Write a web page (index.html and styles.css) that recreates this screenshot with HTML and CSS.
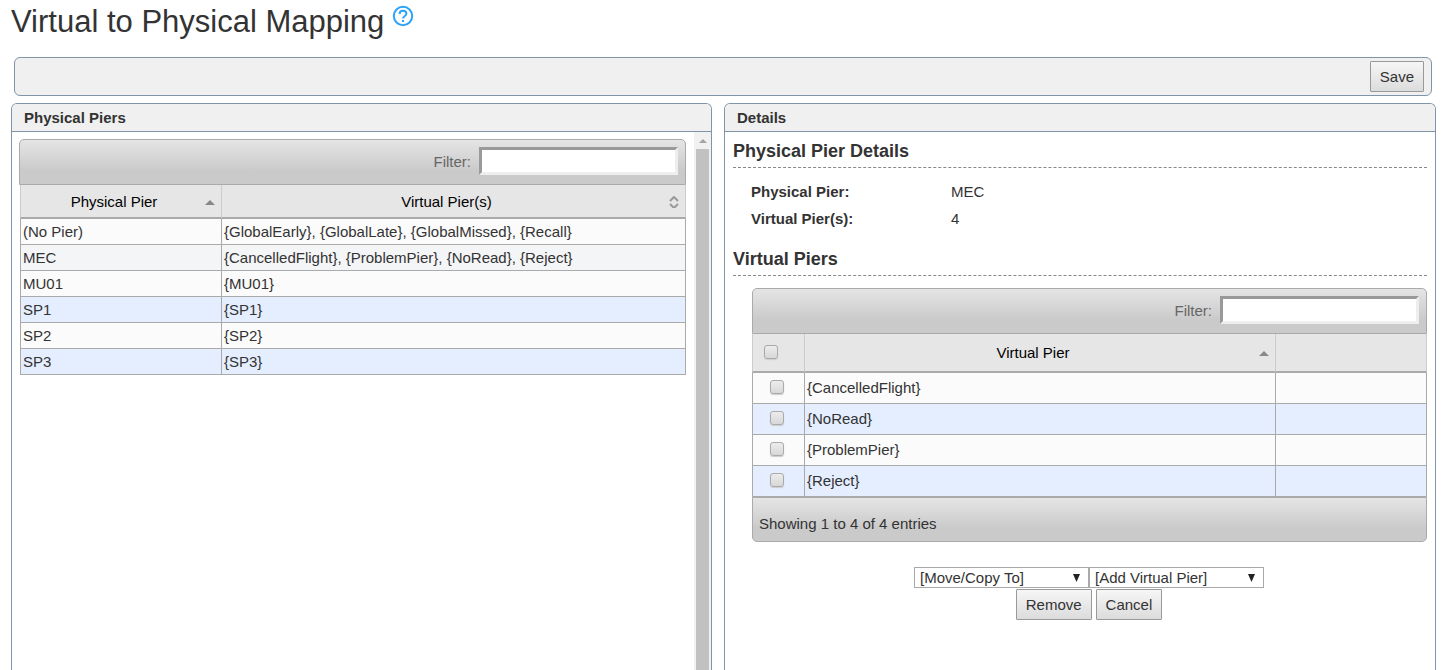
FILE: index.html
```
<!DOCTYPE html>
<html lang="en">
<head>
<meta charset="utf-8">
<title>Virtual to Physical Mapping</title>
<link rel="stylesheet" href="styles.css">
</head>
<body>
<header class="page-header">
  <h1 class="page-title">Virtual to Physical Mapping</h1>
  <a class="help" href="#" aria-label="Help">
    <svg width="22" height="22" viewBox="0 0 22 22" fill="none" stroke="#2ea3fb" stroke-width="2">
      <circle cx="11" cy="11" r="9.2"/>
      <path d="M7.6 9C7.6 6.7 9 5.700 11 5.700S14.400 7 14.400 8.700C14.400 11 11 11 11 13.600"/>
      <path d="M11 15v2"/>
    </svg>
  </a>
</header>
<div class="toolbar"><button type="button" class="btn">Save</button></div>
<main class="panels">
  <section class="panel">
    <h2 class="panel-title">Physical Piers</h2>
    <div class="scroll-area">
      <div class="scroll-content">
        <div class="table-bar table-top">
          <label for="pier-filter">Filter:</label>
          <input class="filter" id="pier-filter" type="text">
        </div>
        <table class="grid piers">
          <colgroup><col class="col-pier"><col></colgroup>
          <thead>
            <tr>
              <th><span class="head">Physical Pier<svg class="sort" width="10" height="12" viewBox="0 0 10 12"><path d="M0 9L5 4l5 5z" fill="#888"/></svg></span></th>
              <th><span class="head">Virtual Pier(s)<svg class="sort" width="10" height="12" viewBox="0 0 10 12" fill="none" stroke="#999" stroke-width="2"><path d="M1 5l4-4 4 4M1 8l4 4 4-4"/></svg></span></th>
            </tr>
          </thead>
          <tbody>
            <tr><td>(No Pier)</td><td>{GlobalEarly}, {GlobalLate}, {GlobalMissed}, {Recall}</td></tr>
            <tr class="current"><td>MEC</td><td>{CancelledFlight}, {ProblemPier}, {NoRead}, {Reject}</td></tr>
            <tr><td>MU01</td><td>{MU01}</td></tr>
            <tr><td>SP1</td><td>{SP1}</td></tr>
            <tr><td>SP2</td><td>{SP2}</td></tr>
            <tr><td>SP3</td><td>{SP3}</td></tr>
          </tbody>
        </table>
      </div>
      <div class="scrollbar" aria-hidden="true">
        <svg class="scroll-up" width="17" height="17" viewBox="0 0 17 17"><path d="M5 11l4-4 4 4z" fill="#a3a3a3"/></svg>
        <div class="scroll-thumb"></div>
      </div>
    </div>
  </section>
  <section class="panel">
    <h2 class="panel-title">Details</h2>
    <div class="details">
      <h3 class="section-title">Physical Pier Details</h3>
      <dl class="facts">
        <dt>Physical Pier:</dt><dd>MEC</dd>
        <dt>Virtual Pier(s):</dt><dd>4</dd>
      </dl>
      <h3 class="section-title">Virtual Piers</h3>
      <div class="virtual">
        <div class="table-bar table-top">
          <label for="virtual-filter">Filter:</label>
          <input class="filter" id="virtual-filter" type="text">
        </div>
        <table class="grid members">
          <colgroup><col class="col-check"><col><col class="col-extra"></colgroup>
          <thead>
            <tr>
              <th class="check-all"><input type="checkbox" class="check" aria-label="Select all"></th>
              <th><span class="head">Virtual Pier<svg class="sort" width="10" height="12" viewBox="0 0 10 12"><path d="M0 9L5 4l5 5z" fill="#888"/></svg></span></th>
              <th></th>
            </tr>
          </thead>
          <tbody>
            <tr><td class="check-cell"><input type="checkbox" class="check" id="c1"></td><td><label for="c1">{CancelledFlight}</label></td><td></td></tr>
            <tr><td class="check-cell"><input type="checkbox" class="check" id="c2"></td><td><label for="c2">{NoRead}</label></td><td></td></tr>
            <tr><td class="check-cell"><input type="checkbox" class="check" id="c3"></td><td><label for="c3">{ProblemPier}</label></td><td></td></tr>
            <tr><td class="check-cell"><input type="checkbox" class="check" id="c4"></td><td><label for="c4">{Reject}</label></td><td></td></tr>
          </tbody>
        </table>
        <div class="table-bar table-bottom">Showing 1 to 4 of 4 entries</div>
        <div class="actions">
          <div class="action-row">
            <span class="pick"><select class="select" aria-label="Move or copy to"><option>[Move/Copy To]</option></select><svg class="arrow" width="7" height="8" viewBox="0 0 7 8"><path d="M0 0h7L3.5 8z" fill="#222"/></svg></span>
            <span class="pick"><select class="select" aria-label="Add virtual pier"><option>[Add Virtual Pier]</option></select><svg class="arrow" width="7" height="8" viewBox="0 0 7 8"><path d="M0 0h7L3.5 8z" fill="#222"/></svg></span>
          </div>
          <div class="action-row buttons">
            <button type="button" class="btn">Remove</button>
            <button type="button" class="btn">Cancel</button>
          </div>
        </div>
      </div>
    </div>
  </section>
</main>
</body>
</html>
```
FILE: styles.css
```
* { box-sizing: border-box; }

body {
  display: flex;
  flex-direction: column;
  height: 100vh;
  margin: 0;
  padding: 0 16px 0 11px;
  overflow: hidden;
  background: #fff;
  color: #333;
  font-family: "Liberation Sans", Arial, sans-serif;
  font-size: 15px;
  line-height: 18px;
}

button, input, select { font: inherit; color: inherit; }

.page-header {
  display: flex;
  align-items: flex-start;
  gap: 8px;
  padding-top: 4px;
  height: 57px;
}

.page-title {
  margin: 0;
  font-size: 31px;
  font-weight: 400;
  line-height: 36px;
}

.help { display: block; height: 22px; margin-top: 1px; }
.help svg { display: block; }

.toolbar {
  display: flex;
  justify-content: flex-end;
  margin: 0 4px 7px 3px;
  padding: 3px 7px;
  border: 1px solid #8096a8;
  border-radius: 6px;
  background: #f0f0f0;
}

.btn {
  height: 31px;
  padding: 0 9px;
  border: 1px solid #999;
  border-radius: 1px;
  background: linear-gradient(#f6f6f6, #dcdcdc);
}

.panels {
  display: grid;
  grid-template-columns: 701fr 712fr;
  gap: 12px;
  flex: 1;
  min-height: 0;
}

.panel {
  display: flex;
  flex-direction: column;
  min-width: 0;
  border: 1px solid #8096a8;
  border-bottom: 0;
  border-radius: 6px 6px 0 0;
}

.panel-title {
  margin: 0;
  padding: 5px 12px 4px;
  border-bottom: 1px solid #8096a8;
  border-radius: 5px 5px 0 0;
  background: #f0f0f0;
  font-size: 15px;
  line-height: 18px;
}

.scroll-area { display: flex; flex: 1; min-height: 0; }
.scroll-content { flex: 1; min-width: 0; padding: 7px 8px 0 7px; }

.scrollbar {
  display: flex;
  flex-direction: column;
  width: 17px;
  background: #f1f1f1;
}
.scroll-up { display: block; }
.scroll-thumb { flex: 1; margin: 0 2px; background: #c1c1c1; }

.table-bar {
  display: flex;
  align-items: center;
  height: 46px;
  border: 1px solid #aaa;
  background: linear-gradient(#e5e5e5, #cacaca 70%, #cacaca);
}
.table-top {
  justify-content: flex-end;
  gap: 8px;
  padding-right: 7px;
  border-radius: 5px 5px 0 0;
  color: #666;
}
.table-bottom {
  height: 45px;
  padding: 8px 6px 0;
  border-radius: 0 0 5px 5px;
}

.filter {
  width: 199px;
  height: 28px;
  margin: 0 0 2px;
  padding: 1px;
  border: 3px solid;
  border-color: #999 #eee #eee #999;
  background: #fff;
}

.grid {
  width: 100%;
  border-collapse: separate;
  border-spacing: 0;
  table-layout: fixed;
}
.grid th {
  padding: 1px 6px 0 2px;
  border-right: 1px solid #ccc;
  border-bottom: 2px solid #aaa;
  background: #e6e6e6;
  color: #000;
  font-weight: 400;
}
.grid th:first-child { border-left: 1px solid #ccc; }
.grid td {
  padding: 0 2px;
  border-right: 1px solid #aaa;
  border-bottom: 1px solid #aaa;
  background: #fbfbfb;
}
.grid td:first-child { border-left: 1px solid #aaa; }
.grid tr:nth-child(even) td { background: #e4eeff; }
.grid .current:nth-child(even) td { background: #f3f5f7; }

.head {
  display: grid;
  grid-template-columns: 1fr 10px;
  align-items: center;
}

.piers { margin-left: 1px; width: calc(100% - 1px); }
.piers th { height: 34px; }
.piers td { height: 26px; }
.col-pier { width: 202px; }

.details { padding: 9px 8px 0; }

.section-title {
  margin: 0;
  padding-bottom: 6px;
  border-bottom: 1px dashed #888;
  font-size: 18px;
  line-height: 20px;
}

.facts {
  display: grid;
  grid-template-columns: 200px 1fr;
  row-gap: 9px;
  margin: 15px 0 21px 18px;
}
.facts dt { font-weight: 700; }
.facts dd { margin: 0; }

.virtual { padding: 12px 0 0 19px; }

.members th { height: 39px; }
.members td { height: 31px; }
.members .check-all { padding: 0 0 2px 11px; text-align: left; }
.members .check-cell { padding: 0 0 2px 17px; }
.col-check { width: 53px; }
.col-extra { width: 151px; }

.check {
  display: block;
  width: 14px;
  height: 14px;
  margin: 0;
  appearance: none;
  border: 1px solid #aaa;
  border-radius: 3px;
  background: linear-gradient(#ececec, #d8d8d8);
  box-shadow: 0 1px 1px #ccc;
}

.actions { padding-top: 25px; }
.action-row { display: flex; justify-content: center; padding-right: 1px; }
.buttons { gap: 4px; margin-top: 1px; }

.pick { display: grid; width: 175px; align-items: center; }
.pick > * { grid-area: 1 / 1; }
.select {
  width: 100%;
  height: 21px;
  padding: 0 5px;
  appearance: none;
  border: 1px solid #aaa;
  border-radius: 0;
  background: #fff;
  line-height: 18px;
}
.arrow { justify-self: end; margin-right: 9px; pointer-events: none; }
```
